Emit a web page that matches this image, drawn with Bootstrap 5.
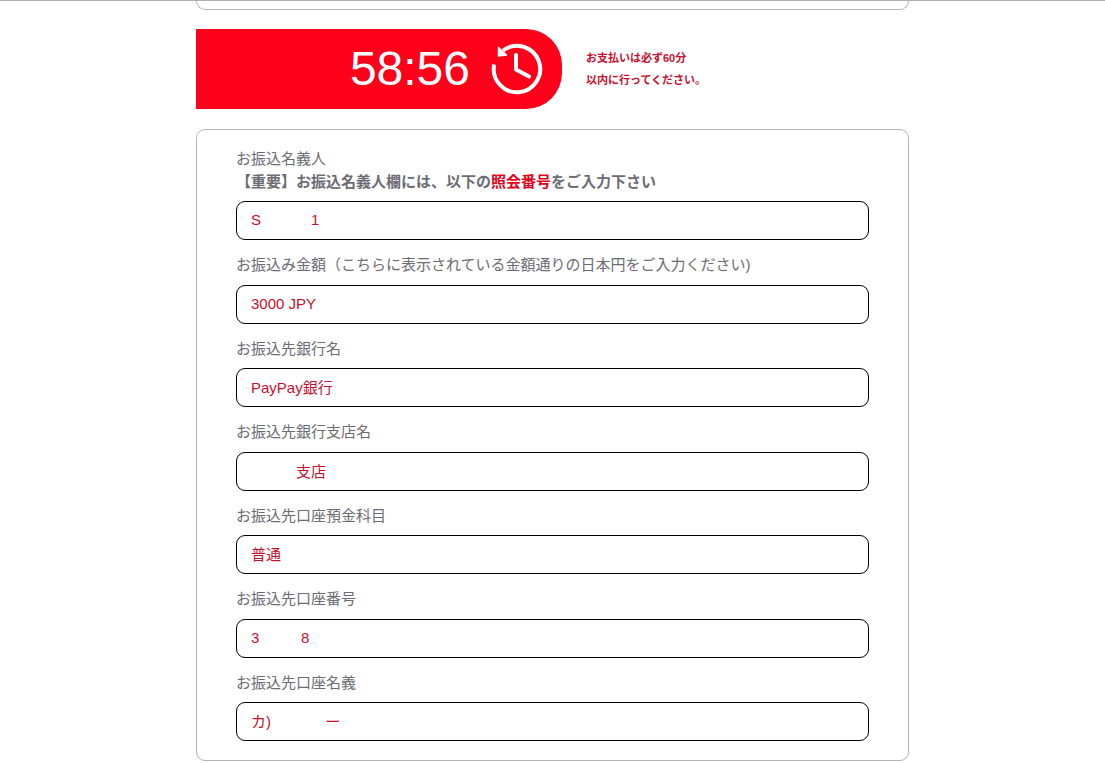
<!DOCTYPE html>
<html lang="ja">
<head>
<meta charset="utf-8">
<meta name="viewport" content="width=device-width, initial-scale=1">
<title>お振込情報</title>
<link href="https://cdn.jsdelivr.net/npm/bootstrap@5.3.0/dist/css/bootstrap.min.css" rel="stylesheet">
<style>
  body {
    font-family: "Liberation Sans", "Noto Sans CJK JP", sans-serif;
    font-size: 15px;
    color: #6c6c74;
    background: #fff;
    border-top: 1px solid #b0b0b0;
  }
  .page-wrap { max-width: 713px; }
  .panel { border: 1px solid #b4b4b4; border-radius: 9px; }
  .panel-prev { height: 9px; border-top: 0; border-top-left-radius: 0; border-top-right-radius: 0; }
  .panel-form { padding: 18px 39px 19px; }
  .timer-row { gap: 24px; margin: 19px 0 20px; }
  .timer {
    flex: 0 0 366px;
    height: 80px;
    padding-right: 18px;
    gap: 20px;
    background: #ff001a;
    color: #fff;
    font-size: 48px;
    line-height: 1;
    border-radius: 0 36px 36px 0;
  }
  .timer-note { font-size: 11px; line-height: 22px; color: #c8102e; }
  .field + .field { margin-top: 14px; }
  .field label { display: block; margin-bottom: 8px; }
  .field .form-control {
    height: 39px;
    padding: 0 14px 2px;
    font-size: 15px;
    color: #c8102e;
    border: 1px solid #000;
    border-radius: 9px;
  }
  .key { color: #e2001a; }
</style>
</head>
<body>
<main class="page-wrap mx-auto">
  <div class="panel panel-prev"></div>

  <div class="timer-row d-flex align-items-center">
    <div class="timer d-flex align-items-center justify-content-end">
      <span role="timer">58:56</span>
      <svg width="54" height="54" viewBox="0 0 54 54" fill="none" stroke="#fff" stroke-width="4" aria-hidden="true">
        <path d="M4.200 22.500A23.200 23.200 0 1 0 13 8.500"/>
        <path d="M8.500 5.500v8.500l8-1z" fill="#fff" stroke-width="1.500" stroke-linejoin="round"/>
        <path d="M26 13v14.500l13 7" stroke-linecap="round" stroke-linejoin="round"/>
      </svg>
    </div>
    <div class="timer-note fw-bold">お支払いは必ず60分<br>以内に行ってください。</div>
  </div>

  <form class="panel panel-form">
    <div class="field">
      <label for="payer">お振込名義人<br><b>【重要】お振込名義人欄には、以下の<span class="key">照会番号</span>をご入力下さい</b></label>
      <input class="form-control" id="payer" type="text" readonly value="S            1">
    </div>
    <div class="field">
      <label for="amount">お振込み金額（こちらに表示されている金額通りの日本円をご入力ください)</label>
      <input class="form-control" id="amount" type="text" readonly value="3000 JPY">
    </div>
    <div class="field">
      <label for="bank">お振込先銀行名</label>
      <input class="form-control" id="bank" type="text" readonly value="PayPay銀行">
    </div>
    <div class="field">
      <label for="branch">お振込先銀行支店名</label>
      <input class="form-control" id="branch" type="text" readonly value="　　　支店">
    </div>
    <div class="field">
      <label for="kind">お振込先口座預金科目</label>
      <input class="form-control" id="kind" type="text" readonly value="普通">
    </div>
    <div class="field">
      <label for="number">お振込先口座番号</label>
      <input class="form-control" id="number" type="text" readonly value="3          8">
    </div>
    <div class="field">
      <label for="holder">お振込先口座名義</label>
      <input class="form-control" id="holder" type="text" readonly value="カ)             ー">
    </div>
  </form>
</main>
<script src="https://cdn.jsdelivr.net/npm/bootstrap@5.3.0/dist/js/bootstrap.bundle.min.js"></script>
</body>
</html>
